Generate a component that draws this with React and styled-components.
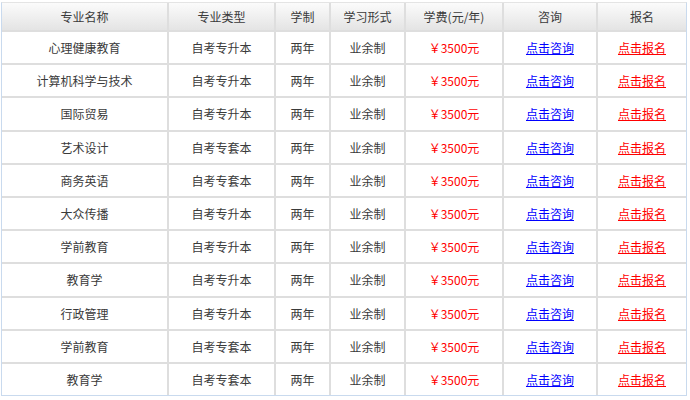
import React from "react";
import styled, { createGlobalStyle } from "styled-components";

const GlobalStyle = createGlobalStyle`
  html, body {
    margin: 0;
    padding: 0;
    background: #fff;
  }
  body {
    font-family: "Noto Sans CJK SC", "DejaVu Sans", sans-serif;
  }
`;

const Frame = styled.div`
  width: 684px;
  margin: 2px 0 0 1px;
  border: 1px solid #c9daee;
  border-top-color: #e4e4e4;
`;

const Table = styled.table`
  width: 100%;
  border-collapse: collapse;
  table-layout: fixed;
  font-size: 12px;
  color: #3a3a3a;
`;

const Head = styled.th`
  height: 27px;
  padding: 0;
  font-weight: normal;
  text-align: center;
  color: #3a3a3a;
  background: linear-gradient(#fbfbfb, #e4e4e4);
  border: 2px solid #dedede;
  border-top: none;
  &:first-child { border-left: none; }
  &:last-child { border-right: none; }
`;

const Cell = styled.td`
  height: 31.2px;
  padding: 0;
  text-align: center;
  color: ${({ $tone }) => ($tone === "red" ? "#ff0000" : "#3a3a3a")};
  border: 2px solid #dedede;
  &:first-child { border-left: none; }
  &:last-child { border-right: none; }
  tr:last-child > & { border-bottom: none; }
`;

const Link = styled.a`
  color: ${({ $red }) => ($red ? "#ff0000" : "#0000ff")};
  text-decoration: underline;
  cursor: pointer;
`;

const columns = [
  { title: "专业名称", width: 166 },
  { title: "专业类型", width: 107 },
  { title: "学制", width: 55 },
  { title: "学习形式", width: 75 },
  { title: "学费(元/年)", width: 98 },
  { title: "咨询", width: 94 },
  { title: "报名" },
];

const majors = [
  ["心理健康教育", "自考专升本"],
  ["计算机科学与技术", "自考专升本"],
  ["国际贸易", "自考专升本"],
  ["艺术设计", "自考专套本"],
  ["商务英语", "自考专套本"],
  ["大众传播", "自考专升本"],
  ["学前教育", "自考专升本"],
  ["教育学", "自考专升本"],
  ["行政管理", "自考专升本"],
  ["学前教育", "自考专套本"],
  ["教育学", "自考专套本"],
];

export default function App() {
  return (
    <>
      <GlobalStyle />
      <Frame>
        <Table>
          <colgroup>
            {columns.map((c, i) => (
              <col key={i} style={c.width ? { width: c.width } : undefined} />
            ))}
          </colgroup>
          <thead>
            <tr>
              {columns.map((c) => (
                <Head key={c.title}>{c.title}</Head>
              ))}
            </tr>
          </thead>
          <tbody>
            {majors.map(([name, type], i) => (
              <tr key={i}>
                <Cell>{name}</Cell>
                <Cell>{type}</Cell>
                <Cell>两年</Cell>
                <Cell>业余制</Cell>
                <Cell $tone="red">￥3500元</Cell>
                <Cell>
                  <Link>点击咨询</Link>
                </Cell>
                <Cell>
                  <Link $red>点击报名</Link>
                </Cell>
              </tr>
            ))}
          </tbody>
        </Table>
      </Frame>
    </>
  );
}
